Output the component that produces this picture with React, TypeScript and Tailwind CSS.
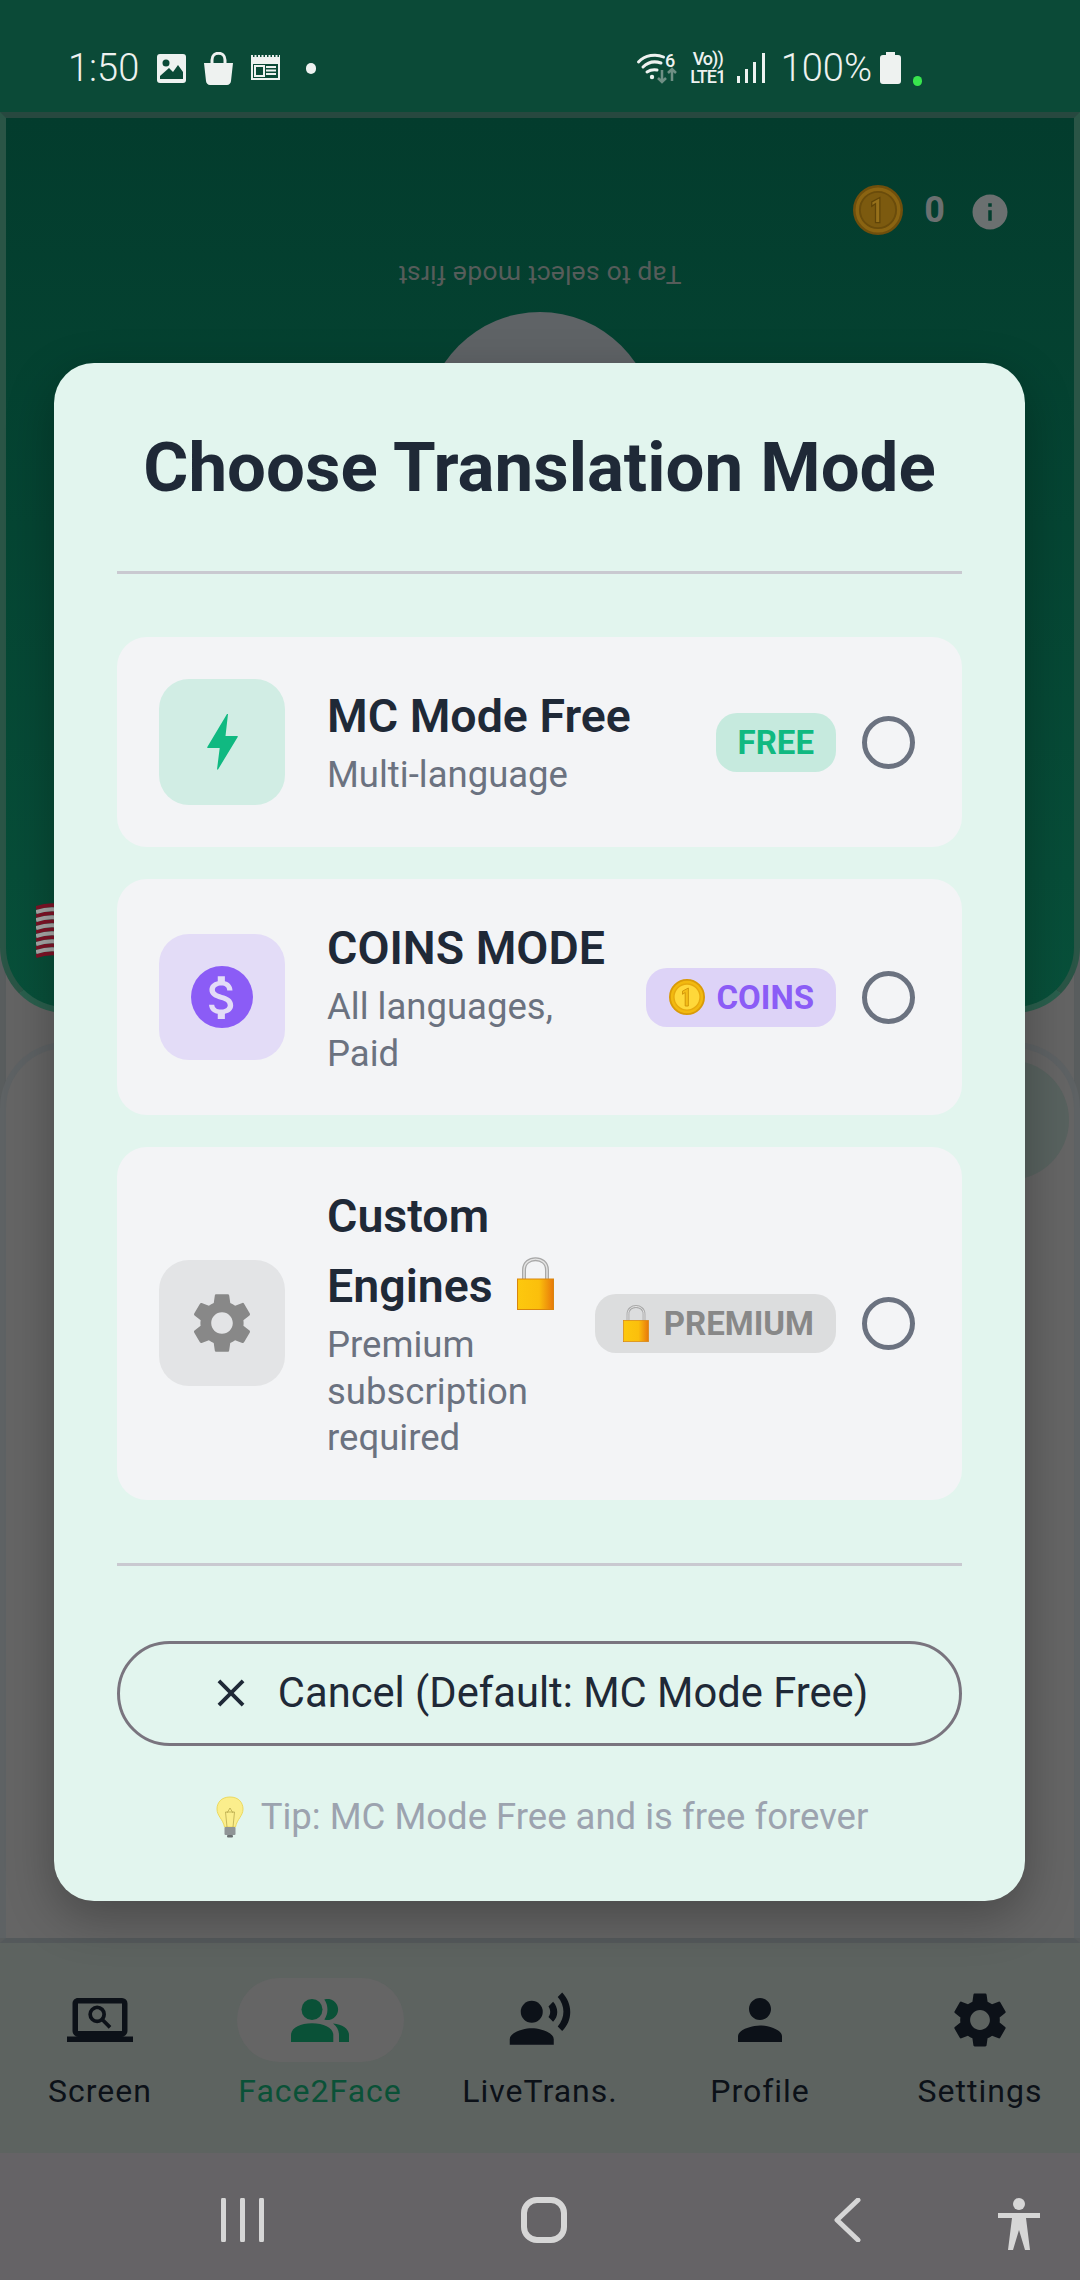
import React from "react";
import { MdScreenSearchDesktop, MdRecordVoiceOver, MdPerson, MdSettings, MdInfo, MdAttachMoney, MdClose } from "react-icons/md";

const Coin = ({ size, dim = false }: { size: number; dim?: boolean }) => (
  <svg width={size} height={size} viewBox="0 0 40 40" className="shrink-0">
    <circle cx="20" cy="20" r="19" fill={dim ? "#8a6412" : "#f2b90f"} stroke={dim ? "#6f4f0c" : "#d99a08"} strokeWidth="2" />
    <circle cx="20" cy="20" r="14.5" fill={dim ? "#7c5a0f" : "#ffd83a"} stroke={dim ? "#6a4c0b" : "#e7a90e"} strokeWidth="1.5" />
    <path d="M21.5 10 L21.5 30 L18 30 L18 15 L15 17 L15 13.5 Z" fill={dim ? "#96701a" : "#f5be18"} stroke={dim ? "#604508" : "#cf9208"} strokeWidth="1" />
  </svg>
);

const Lock = ({ w, h }: { w: number; h: number }) => (
  <svg width={w} height={h} viewBox="0 0 37 53" className="shrink-0">
    <defs>
      <linearGradient id="lockBody" x1="0" x2="1" y1="0" y2="0">
        <stop offset="0" stopColor="#fdc80e" />
        <stop offset="0.6" stopColor="#fbbf0c" />
        <stop offset="1" stopColor="#e8780a" />
      </linearGradient>
    </defs>
    <path d="M7 24 V13 C7 -1.5 30 -1.5 30 13 V24" fill="none" stroke="#a8a8a8" strokeWidth="4" />
    <path d="M7 24 V13 C7 -1.5 30 -1.5 30 13 V24" fill="none" stroke="#e4e4e4" strokeWidth="1.4" />
    <rect x="0.5" y="22" width="36" height="30.5" fill="url(#lockBody)" stroke="#d9860e" strokeWidth="1" />
  </svg>
);

const Bulb = () => (
  <svg width="28" height="42" viewBox="0 0 28 42" className="shrink-0">
    <path d="M14 1 C5 1 1 7 1 13 C1 20 7 23 8.5 31 H19.5 C21 23 27 20 27 13 C27 7 23 1 14 1 Z" fill="#fbee8c" stroke="#ecd95e" strokeWidth="1" />
    <path d="M11 31 L9.5 16 H18.5 L17 31 M11 17 L14 12 L17 17" fill="none" stroke="#b9a94c" strokeWidth="0.8" />
    <rect x="8.5" y="31" width="11" height="8" rx="1" fill="#8f9496" />
    <rect x="11" y="39" width="6" height="2.5" rx="1" fill="#6b7072" />
  </svg>
);

const PeopleIcon = () => (
  <svg width="58" height="43" viewBox="0 0 58 43" fill="currentColor">
    <circle cx="21" cy="10.5" r="10.5" />
    <path d="M0 43 V36 C0 29 9 24.3 21 24.3 C33 24.3 42.3 29 42.3 36 V43 Z" />
    <path d="M33.3 0.4 A10.6 10.6 0 1 1 33.3 20.6 C37.5 15 37.5 6 33.3 0.4 Z" />
    <path d="M42 24.5 C52 25.5 58 30 58 36 V43 H48 V36 C48 31.5 46 27.5 42 24.5 Z" />
  </svg>
);

const Radio = () => (
  <div className="ml-[26px] mr-[5px] h-[53px] w-[53px] shrink-0 rounded-full border-[5px] border-[#6b7280]" />
);

const NavItem = ({ icon, label, active = false }: { icon: React.ReactNode; label: string; active?: boolean }) => (
  <div className={`flex w-[220px] shrink-0 flex-col items-center ${active ? "text-[#0a5137]" : "text-[#0c1118]"}`}>
    <div className={`flex h-[84px] w-[167px] items-center justify-center rounded-[42px] ${active ? "bg-[#656565]" : ""}`}>{icon}</div>
    <div className="mt-[7px] text-[32px] leading-[44px] tracking-[1px]">{label}</div>
  </div>
);

const StatusBar = () => (
  <div className="flex h-[112px] shrink-0 items-center bg-[#0b4a37] pl-[68px] pr-[158px] pt-[24px] text-[#eef2f0]">
    <span className="text-[38px] font-light leading-none">1:50</span>
    <svg width="29" height="29" viewBox="0 0 29 29" className="ml-[18px]">
      <rect width="29" height="29" rx="3" fill="#eef2f0" />
      <circle cx="9" cy="9" r="3.5" fill="#0b4a37" />
      <path d="M3 25 L3 22 L12 14 L16 18 L21 11 L26 18 L26 25 Z" fill="#0b4a37" />
    </svg>
    <svg width="31" height="33" viewBox="0 0 31 33" className="ml-[17px]">
      <path d="M1 11 H30 L28 29 C28 31 26 33 24 33 H7 C5 33 3 31 3 29 Z" fill="#eef2f0" />
      <path d="M9 13 V8 C9 -1 22 -1 22 8 V13" fill="none" stroke="#eef2f0" strokeWidth="3" />
    </svg>
    <svg width="31" height="26" viewBox="0 0 31 26" className="ml-[16px]">
      <path d="M1 2 H30 V25 H1 Z M3 9 V23 H28 V9 Z" fill="#eef2f0" fillRule="evenodd" />
      <path d="M1 1 H30" stroke="#eef2f0" strokeWidth="2" strokeDasharray="2 1.5" />
      <rect x="5" y="11" width="9" height="10" fill="none" stroke="#eef2f0" strokeWidth="2" />
      <path d="M16 12 H26 M16 15.5 H26 M16 19 H26" stroke="#eef2f0" strokeWidth="2" />
    </svg>
    <div className="ml-[25px] h-[11px] w-[10px] rounded-full bg-[#eef2f0]" />
    <div className="flex-1" />
    <svg width="41" height="32" viewBox="0 0 41 32" className="overflow-visible">
      <path d="M1.5 10 C8 3 19 1.5 26.5 5 M6 15 C11 10 18 9 24 11 M10 20 C13 18 17 17.5 20 18" fill="none" stroke="#eef2f0" strokeWidth="3" strokeLinecap="round" />
      <circle cx="15" cy="25" r="2.2" fill="#eef2f0" />
      <path d="M25 18 V30 M21 26 L25 30 L29 26" fill="none" stroke="#6f8f84" strokeWidth="2.5" />
      <path d="M35 29 V17 M31 21 L35 17 L39 21" fill="none" stroke="#6f8f84" strokeWidth="2.5" />
      <text x="28" y="15" fontSize="18" fontWeight="500" fill="#eef2f0" fontFamily="Roboto, sans-serif">6</text>
    </svg>
    <div className="ml-[11px] flex w-[38px] flex-col items-center text-[18px] font-medium leading-[18px] tracking-[-1px]">
      <span>Vo))</span>
      <span>LTE1</span>
    </div>
    <svg width="28" height="30" viewBox="0 0 28 30" className="ml-[10px]">
      <rect x="0" y="23" width="3" height="7" fill="#eef2f0" />
      <rect x="8" y="16" width="3" height="14" fill="#eef2f0" />
      <rect x="16" y="9" width="3" height="21" fill="#eef2f0" />
      <rect x="25" y="0" width="3" height="30" fill="#eef2f0" />
    </svg>
    <span className="ml-[16px] text-[38px] font-light leading-none">100%</span>
    <svg width="21" height="32" viewBox="0 0 21 32" className="ml-[8px]">
      <path d="M6 0 H15 V3 H18 C20 3 21 4 21 6 V29 C21 31 20 32 18 32 H3 C1 32 0 31 0 29 V6 C0 4 1 3 3 3 H6 Z" fill="#eef2f0" />
    </svg>
    <div className="mb-[26px] ml-[12px] h-[10px] w-[9px] self-end rounded-full bg-[#38e54d]" />
  </div>
);

const Background = () => (
  <div className="relative flex flex-1 flex-col border-x-[6px] border-b-[5px] border-x-[#595d5e] border-b-[#54595b] bg-[#646464]">
    <div className="-mx-[6px] flex h-[901px] shrink-0 flex-col items-center rounded-b-[66px] border-x-[6px] border-b-[6px] border-t-[6px] border-x-[#2a5546] border-b-[#2a5f4d] border-t-[#27483f] bg-gradient-to-b from-[#033c2d] to-[#08503a]">
      <div className="flex w-full items-center justify-end pr-[63px] pt-[67px]">
        <Coin size={50} dim />
        <span className="ml-[21px] text-[36px] font-bold leading-none text-[#6b7070]">0</span>
        <MdInfo className="ml-[24px] mt-[4px] text-[#6b7070]" size={42} />
      </div>
      <div className="mt-[25px] rotate-180 text-[26.5px] leading-[30px] tracking-[0.2px] text-[#565c5a]">Tap to select mode first</div>
      <div className="mt-[22px] h-[230px] w-[230px] rounded-full bg-[#5f6366]" />
      <div className="mt-[358px] flex w-full pl-[30px]">
        <svg width="60" height="58" viewBox="0 0 60 58">
          {[0, 1, 2, 3, 4, 5, 6].map((i) => (
            <path key={i} d={`M0 ${8 + i * 8} Q12 ${4 + i * 8} 24 ${6 + i * 8}`} fill="none" stroke="#7f1327" strokeWidth="4" />
          ))}
          {[0, 1, 2, 3, 4, 5].map((i) => (
            <path key={i} d={`M0 ${12 + i * 8} Q12 ${8 + i * 8} 24 ${10 + i * 8}`} fill="none" stroke="#a9a9a9" strokeWidth="4" />
          ))}
        </svg>
      </div>
    </div>
    <div className="mt-[29px] flex-1 rounded-t-[66px] border-x-[6px] border-t-[6px] border-[#5e6264] bg-[#656565] -mx-[6px] pt-[12px]">
      <div className="flex justify-end pr-[5px]">
        <div className="h-[120px] w-[120px] rounded-full bg-[#58625f]" />
      </div>
    </div>
  </div>
);

const BottomNav = () => (
  <div className="flex h-[210px] shrink-0 justify-center overflow-hidden bg-[#5d6360] pt-[35px]">
    <NavItem icon={<MdScreenSearchDesktop size={66} />} label="Screen" />
    <NavItem active icon={<PeopleIcon />} label="Face2Face" />
    <NavItem icon={<MdRecordVoiceOver size={66} />} label="LiveTrans." />
    <NavItem icon={<MdPerson size={66} />} label="Profile" />
    <NavItem icon={<MdSettings size={66} />} label="Settings" />
  </div>
);

const SystemNav = () => (
  <div className="flex h-[127px] shrink-0 items-center bg-[#656366] pl-[221px] pt-[6px]">
    <svg width="43" height="44" viewBox="0 0 43 44">
      <path d="M2.5 2 V42 M21.5 2 V42 M40.5 2 V42" stroke="#d6d6d6" strokeWidth="5" strokeLinecap="round" />
    </svg>
    <svg width="46" height="46" viewBox="0 0 46 46" className="ml-[257px]">
      <rect x="3" y="3" width="40" height="40" rx="13" fill="none" stroke="#d6d6d6" strokeWidth="6" />
    </svg>
    <svg width="28" height="44" viewBox="0 0 28 44" className="ml-[266px]">
      <path d="M25 2 L4 22 L25 42" fill="none" stroke="#d6d6d6" strokeWidth="5" strokeLinecap="round" strokeLinejoin="round" />
    </svg>
    <svg width="44" height="52" viewBox="0 0 44 52" className="ml-[136px] mt-[8px]">
      <circle cx="22" cy="6" r="6" fill="#d6d6d6" />
      <path d="M1 15 H43 V20 H29 L33 52 H28 L22 32 L16 52 H11 L15 20 H1 Z" fill="#d6d6d6" />
    </svg>
  </div>
);

type Opt = {
  iconBg: string;
  icon: React.ReactNode;
  title: React.ReactNode;
  sub: React.ReactNode;
  badge: React.ReactNode;
};

const Option = ({ iconBg, icon, title, sub, badge }: Opt) => (
  <div className="flex items-center rounded-[30px] bg-[#f3f4f6] p-[42px]">
    <div className={`flex h-[126px] w-[126px] shrink-0 items-center justify-center rounded-[30px] ${iconBg}`}>{icon}</div>
    <div className="ml-[42px] min-w-0 flex-1">
      <div className="mb-[4px] text-[46.5px] font-semibold leading-[55px] text-[#1f2937]">{title}</div>
      <div className="-mb-[4px] pt-[4px] text-[36.5px] leading-[46.5px] text-[#6b7280]">{sub}</div>
    </div>
    {badge}
    <Radio />
  </div>
);

const Badge = ({ bg, fg, children }: { bg: string; fg: string; children: React.ReactNode }) => (
  <div className={`flex h-[59px] shrink-0 items-center rounded-[21px] px-[22px] text-[33px] font-bold leading-none ${bg} ${fg}`}>{children}</div>
);

const Modal = () => (
  <div className="absolute left-[54px] top-[363px] flex h-[1538px] w-[971px] flex-col rounded-[40px] bg-[#e2f5ee] px-[63px] pt-[63px] shadow-[0_16px_48px_rgba(0,0,0,0.28)]">
    <h1 className="text-center text-[69px] font-bold leading-[84px] text-[#1f2937]">Choose Translation Mode</h1>
    <div className="mt-[61px] h-[3px] bg-[#c9c9d0]" />
    <div className="mt-[63px] flex flex-col gap-[32px]">
      <Option
        iconBg="bg-[#d1ede4]"
        icon={
          <svg width="31" height="56" viewBox="0 0 31 56">
            <path d="M20 0 H21 L18.5 22 H30.7 V23 L11 55.5 H10 L12.7 34 H0.3 V33 Z" fill="#10b981" />
          </svg>
        }
        title="MC Mode Free"
        sub="Multi-language"
        badge={<Badge bg="bg-[#c6eade]" fg="text-[#10b981]">FREE</Badge>}
      />
      <Option
        iconBg="bg-[#e3dcf7]"
        icon={
          <div className="flex h-[62px] w-[62px] items-center justify-center rounded-full bg-[#8b5cf6]">
            <MdAttachMoney className="text-[#e3dcf7]" size={57} />
          </div>
        }
        title="COINS MODE"
        sub={<>All languages,<br />Paid</>}
        badge={
          <Badge bg="bg-[#ddd3f7]" fg="text-[#8b5cf6]">
            <span className="ml-[1px] mr-[11px]"><Coin size={36} /></span>COINS
          </Badge>
        }
      />
      <Option
        iconBg="bg-[#e3e4e6]"
        icon={<MdSettings className="text-[#888888]" size={72} />}
        title={
          <>
            <div className="h-[61px]">Custom</div>
            <div className="flex h-[64px] items-center pt-[8px]">
              Engines
              <span className="-mt-[6px] ml-[24px]"><Lock w={37} h={53} /></span>
            </div>
          </>
        }
        sub={<>Premium<br />subscription<br />required</>}
        badge={
          <Badge bg="bg-[#dcddde]" fg="text-[#888888]">
            <span className="ml-[6px] mr-[15px]"><Lock w={26} h={37} /></span>PREMIUM
          </Badge>
        }
      />
    </div>
    <div className="mt-[63px] h-[3px] bg-[#c9c9d0]" />
    <div className="mt-[75px] flex h-[105px] items-center justify-center gap-[33px] rounded-full border-[3px] border-[#79747e] pl-[6px] text-[41.7px] leading-none text-[#1f2937]">
      <MdClose size={46} className="-mx-[9px]" />
      <span>Cancel (Default: MC Mode Free)</span>
    </div>
    <div className="mt-[50px] flex items-center justify-center gap-[17px] pl-[5px] text-[36.5px] leading-[42px] text-[#9ca3af]">
      <Bulb />
      <span>Tip: MC Mode Free and is free forever</span>
    </div>
  </div>
);

export default function App() {
  return (
    <div className="relative flex h-[2280px] w-[1080px] flex-col overflow-hidden bg-[#646464] font-['Roboto',sans-serif]">
      <StatusBar />
      <Background />
      <BottomNav />
      <SystemNav />
      <Modal />
    </div>
  );
}
